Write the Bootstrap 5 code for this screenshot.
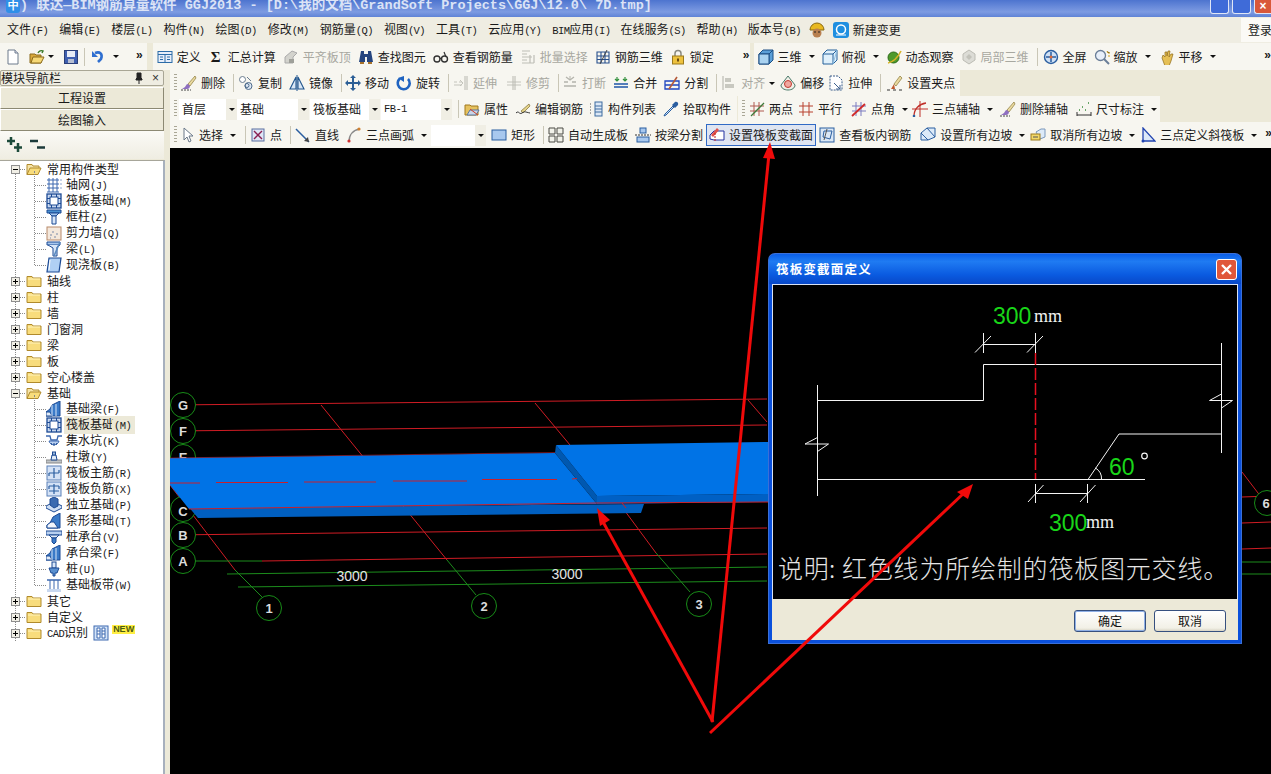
<!DOCTYPE html>
<html lang="zh">
<head>
<meta charset="UTF-8">
<title>联达-BIM钢筋算量软件 GGJ2013</title>
<link href="https://cdn.jsdelivr.net/npm/bootstrap@5.3.3/dist/css/bootstrap.min.css" rel="stylesheet">
<style>
  html, body { margin: 0; height: 100%; overflow: hidden; background: #000; }
  body { font: 12px/16px "Noto Sans CJK SC", "Liberation Sans", sans-serif; color: #1a1a1a; }
  .app { width: 1271px; height: 774px; position: relative; background: #ece9d8; }
  .lt { font: 10.500px/16px "Liberation Mono", monospace; letter-spacing: -.6px; }

  .titlebar { height: 17px; padding-left: 6px; background: linear-gradient(#4d74cf, #7d9be2 70%, #5f83d6); overflow: hidden; }
  .titlebar .ttl { font: bold 13.5px/11px "Liberation Mono", "Noto Sans CJK SC", monospace; color: #dbe3f6; white-space: pre; }
  .appicon { width: 14px; height: 13px; border-radius: 0 0 3px 3px; background: #2f8fe8; color: #fff; font: bold 11px/11px "Liberation Sans", sans-serif; text-align: center; flex: none; }
  .winbtns { margin-left: auto; gap: 3px; }
  .winbtn { width: 19px; height: 14px; border: 1px solid #dfe6f6; border-top: 0; border-radius: 0 0 3px 3px; background: #3f6bd8; position: relative; }
  .winbtn.cls { background: #d9583a; width: 17px; border-right: 0; border-radius: 0 0 0 3px; color: #fff; font: bold 12px/12px "Liberation Sans", sans-serif; text-align: center; }

  .menubar { height: 26px; padding-left: 7px; background: #efede2; }
  .mi { margin-right: 11px; white-space: nowrap; }
  .login { margin-left: auto; width: 30px; height: 24px; line-height: 24px; padding-left: 7px; background: #fbfaf6; overflow: hidden; white-space: nowrap; }

  .tbrow { height: 26px; background: #ece9d8; white-space: nowrap; overflow: hidden; }
  .tbrow.first { height: 27px; }
  .strip { height: 100%; display: flex; align-items: center; background: #f7f6f0; flex: none; overflow: hidden; }
  .grip { width: 3px; height: 18px; margin: 0 2px 0 4px; flex: none; background: repeating-linear-gradient(#a9a695 0 1px, transparent 1px 3px); }
  .tool { display: flex; align-items: center; gap: 4px; margin-right: 7px; flex: none; }
  .tool.off { color: #a8a8a0; }
  .tool.snug { margin-right: 6px; }
  .tool.snug4 { margin-right: 4px; }
  .tool svg, .tk svg, .tn svg, .tico { width: 16px; height: 16px; flex: none; }
  .tri { width: 0; height: 0; border: 3px solid transparent; border-top: 3px solid #111; border-bottom: 0; margin-left: 3px; margin-right: 1px; flex: none; }
  .tri.close { margin-left: 0; }
  .sep { width: 1px; height: 18px; background: #c9c6b6; margin: 0 5px 0 1px; flex: none; }
  .more { font: bold 12px/14px "Liberation Sans", sans-serif; margin-bottom: 4px; flex: none; }
  .sigma { width: 16px; text-align: center; font: bold 15px/16px "Liberation Serif", serif; }
  .combo { display: flex; align-items: center; height: 21px; background: #fff; padding-left: 3px; flex: none; }
  .combo-btn { width: 11px; height: 21px; background: #f0eee4; display: flex; align-items: center; justify-content: center; flex: none; }
  .combo-btn .tri { margin: 0; }
  .combo-wrap { display: flex; flex: none; }
  .combo-a { width: 47px; } .combo-b { width: 61px; } .combo-c { width: 59px; } .combo-d { width: 60px; } .combo-e { width: 44px; }
  .strip-a { width: 790px; } .strip-b { width: 567px; } .strip-c { width: 422px; margin-left: 1px; }
  .picked { border: 1px solid #316ac5; background: #dfe5f1; height: 22px; padding: 0 2px; margin-right: 3px; margin-left: -3px; }
  /* small nudges to keep the toolbar items where the reference has them */
  .mn1 { margin-left: -1px; } .mn2 { margin-left: -2px; } .mn3 { margin-left: -3px; } .mn4 { margin-left: -4px; }
  .mp1 { margin-left: 1px; } .mp2 { margin-left: 2px; } .mp5 { margin-left: 5px; } .mp6 { margin-left: 6px; } .mp22 { margin-left: 22px; } .sepgap { margin-left: 6px; }
  .picked.mn1 { margin-left: -4px; }

  .sidebar { width: 165px; flex: none; position: relative; }
  .panel-h { height: 16px; border: 1px solid #a9a695; border-radius: 2px; margin-right: 1px; background: #efede2; overflow: hidden; }
  .panel-h span.ctl { font: 12px/14px "Liberation Sans", sans-serif; color: #333; }
  .navbtn { height: 22px; line-height: 20px; text-align: center; background: #ece9d8; border: 1px solid #fff; border-bottom: 1px solid #8c8973; border-right: 1px solid #8c8973; margin-right: 1px; }
  .nav-top { margin-top: 1px; }
  .treebar { height: 28px; padding: 6px 0 0 7px; background: linear-gradient(#fbfaf6, #efede2); gap: 7px; margin-right: 1px; }
  .tree { position: absolute; top: 90px; left: 0; right: 0; bottom: 0; background: #fff; border-top: 1px solid #a7a69a; border-right: 2px solid #a7b0bd; }
  .tree::before { content: ""; position: absolute; left: 15px; top: 8px; height: 472px; border-left: 1px dotted #8a8a8a; }
  .tn, .tk { height: 16px; display: flex; align-items: center; position: relative; white-space: nowrap; }
  .tn { padding-left: 26px; gap: 5px; }
  .tn::before { content: ""; position: absolute; left: 16px; width: 9px; top: 8px; border-top: 1px dotted #8a8a8a; }
  .exp { position: absolute; left: 11px; top: 4px; width: 9px; height: 9px; background: #f1efe6; border: 1px solid #8f8f8f; z-index: 1; }
  .exp::before { content: ""; position: absolute; left: 1px; right: 1px; top: 3px; height: 1px; background: #000; }
  .exp.plus::after { content: ""; position: absolute; top: 1px; bottom: 1px; left: 3px; width: 1px; background: #000; }
  .kids { position: relative; }
  .kids::before { content: ""; position: absolute; left: 34px; top: -6px; bottom: 8px; border-left: 1px dotted #8a8a8a; }
  .tk { padding-left: 46px; gap: 4px; }
  .tk::before { content: ""; position: absolute; left: 35px; width: 11px; top: 8px; border-top: 1px dotted #8a8a8a; }
  .tk.cur span { background: #ece9d8; padding: 0 2px; margin-left: -2px; }
  .newtag { font: bold 9px/9px "Liberation Sans", sans-serif; background: #ffee44; color: #4a5a10; padding: 0 1px; margin: -8px 0 0 -2px; }

  .gutter { width: 5px; flex: none; }
  .canvas { background: #000; position: relative; overflow: hidden; }
  .canvas > svg { display: block; width: 1101px; height: 626px; }
  .cadtx { font: bold 13px "Liberation Sans", sans-serif; fill: #dcdcdc; text-anchor: middle; }
  .cadn { font: 14px "Liberation Sans", sans-serif; fill: #e4e4e4; text-anchor: middle; }

  .dlg { position: absolute; left: 599px; top: 106px; width: 472px; height: 389px; background: #ece9d8; border: 3px solid #0a50dc; border-top: 0; border-radius: 6px 6px 0 0; box-shadow: 0 0 0 1px #3a6fd8; }
  .dlg-h { height: 30px; margin: 0 -3px; padding: 0 4px 0 7px; background: linear-gradient(#0a5ee8, #1f7bf2 25%, #0a5ae0 70%, #0848c8); color: #fff; font-weight: 700; font-size: 12.5px; letter-spacing: 1.2px; border-radius: 6px 6px 0 0; }
  .dlg-x { width: 21px; height: 21px; border: 1px solid #fff; border-radius: 3px; background: #e0573a; margin-left: auto; position: relative; }
  .dlg-x svg { display: block; width: 19px; height: 19px; }
  .dlg-b { height: 315px; background: #000; border: 1px solid #d8e2f4; border-bottom: 0; }
  .dlg-b svg { display: block; width: 464px; height: 314px; }
  .dimg { font: 23px "Liberation Sans", sans-serif; fill: #19d619; }
  .dimw { font: 18px "Liberation Serif", serif; fill: #f2f2f2; }
  .dnote { font: 25px "Noto Sans CJK SC", sans-serif; font-weight: 300; fill: #e4e4e4; letter-spacing: .8px; }
  .dlg-f { height: 41px; padding: 11px 12px 0 0; gap: 8px; }
  .xpbtn { width: 72px; height: 22px; padding: 0; font-size: 12px; line-height: 18px; color: #111; border: 1px solid #36507f; border-radius: 3px; background: linear-gradient(#fff, #f2f0e6 85%, #d8d4c4); }
  .xpbtn.dflt { box-shadow: inset 0 0 0 1px #8fb0e6; }

  .overlay { position: absolute; left: 0; top: 0; width: 1271px; height: 774px; pointer-events: none; }
</style>
</head>
<body>
<svg width="0" height="0" class="position-absolute">
  <defs>
    <symbol id="i-new" viewBox="0 0 16 16"><path d="M3 1h7l3 3v11H3z" fill="#fff" stroke="#6d7a8c"/><path d="M10 1v3h3" fill="#dde" stroke="#6d7a8c"/></symbol>
    <symbol id="i-open" viewBox="0 0 16 16"><path d="M1 14V5h5l1 1h5v8z" fill="#d9a93a" stroke="#8b6b1c"/><path d="M2 14l2-6h11l-3 6z" fill="#f6d875" stroke="#8b6b1c"/><path d="M9 4c1-2 3-3 5-2l-1 2" fill="none" stroke="#3a7a2a" stroke-width="1.4"/></symbol>
    <symbol id="i-save" viewBox="0 0 16 16"><rect x="1.5" y="1.5" width="13" height="13" fill="#3f5fb0" stroke="#2b3f78"/><rect x="4" y="2" width="8" height="6" fill="#e8ecf6"/><rect x="5" y="10" width="6" height="4" fill="#b7bfd2"/></symbol>
    <symbol id="i-undo" viewBox="0 0 16 16"><path d="M5 4c5-2 8 1 6 6l-3 3" fill="none" stroke="#2f6fd0" stroke-width="2.6"/><path d="M2 2v6h6z" fill="#2f6fd0"/></symbol>
    <symbol id="i-def" viewBox="0 0 16 16"><rect x="1" y="2.500" width="14" height="11" fill="#e7eefa" stroke="#2c6ca8"/><path d="M1 5.500h14M8 5.500v8M3 8h3M3 10.500h3M10 8h3M10 10.500h3" stroke="#2c6ca8"/></symbol>
    <symbol id="i-flat" viewBox="0 0 16 16"><path d="M2 14V8l7-6 5 2-4 4v6z" fill="#d3d3cd" stroke="#aaa"/><rect x="6" y="10" width="5" height="4" fill="#9fa09a"/></symbol>
    <symbol id="i-bino" viewBox="0 0 16 16"><path d="M3 2h3v3h4V2h3l2 11H9V8H7v5H1z" fill="#26457e"/><path d="M2 13h4v2H2zM10 13h4v2h-4z" fill="#a8722a"/></symbol>
    <symbol id="i-glass" viewBox="0 0 16 16"><circle cx="4" cy="10" r="3" fill="none" stroke="#333" stroke-width="1.4"/><circle cx="11.500" cy="10" r="3" fill="none" stroke="#333" stroke-width="1.4"/><path d="M7 9.500h2M13 8l-2-5" stroke="#333" stroke-width="1.2" fill="none"/></symbol>
    <symbol id="i-batch" viewBox="0 0 16 16"><path d="M2 2h8M2 5h5M2 8h10M2 11h5M2 14h12M14 6v8M10 6v8" stroke="#bdbdb6" stroke-width="1.2"/></symbol>
    <symbol id="i-rebar" viewBox="0 0 16 16"><path d="M2 3h12v11H2zM2 7h12M2 10.500h12M6 3v11M10 3v11" fill="none" stroke="#28508e" stroke-width="1.1"/><path d="M12 1L5 15" stroke="#444"/></symbol>
    <symbol id="i-lock" viewBox="0 0 16 16"><path d="M5 7V4.500a3 3 0 016 0V7" fill="none" stroke="#8a8a80" stroke-width="1.500"/><rect x="2.500" y="7" width="11" height="8" fill="#eec23e" stroke="#9c7a1c"/><rect x="7" y="9.500" width="2" height="3" fill="#6b4c10"/></symbol>
    <symbol id="i-cube" viewBox="0 0 16 16"><path d="M1 5l4-4h10v10l-4 4H1z" fill="#5b9fd8" stroke="#1c4f84"/><path d="M1 5h10v10M11 5l4-4" fill="none" stroke="#1c4f84"/><path d="M1 5h10v10H1z" fill="#a9d2f0" stroke="#1c4f84"/></symbol>
    <symbol id="i-cube2" viewBox="0 0 16 16"><path d="M1 5l4-4h10v10l-4 4H1z" fill="#dff0fb" stroke="#24609a"/><path d="M1 5h10v10M11 5l4-4" fill="none" stroke="#24609a"/><path d="M11 15L15 1" stroke="#8cc0e6"/></symbol>
    <symbol id="i-orbit" viewBox="0 0 16 16"><circle cx="7.500" cy="8.500" r="5.500" fill="#4f9a2c" stroke="#2b6a18"/><path d="M2 14C7 13 12 8 15 2" stroke="#d8b428" stroke-width="1.600" fill="none"/></symbol>
    <symbol id="i-part" viewBox="0 0 16 16"><path d="M8 1l6 4v6l-6 4-6-4V5z" fill="#dcdcd6" stroke="#bcbcb4"/><path d="M8 5l3 3-3 3-3-3z" fill="#c2c2ba"/></symbol>
    <symbol id="i-full" viewBox="0 0 16 16"><circle cx="8" cy="8" r="6.500" fill="#cfe0f4" stroke="#2a5ea0" stroke-width="1.400"/><path d="M8 3v10M3 8h10" stroke="#2a5ea0" stroke-width="1.500"/><circle cx="8" cy="8" r="1.500" fill="#e06a3a"/></symbol>
    <symbol id="i-zoom" viewBox="0 0 16 16"><circle cx="6.500" cy="6.500" r="5" fill="#e8eff9" stroke="#6a7e98" stroke-width="1.300"/><path d="M10 10l5 5" stroke="#6a7e98" stroke-width="2"/><path d="M13 2l1 2 2 0M14 7h2" stroke="#d0a020"/></symbol>
    <symbol id="i-hand" viewBox="0 0 16 16"><path d="M3 9l1-3 2 2V3h2v4l1-5h2l-1 6 2-3h2l-2 7-2 5H6z" fill="#e5bf55" stroke="#8e6a18" stroke-width=".7"/></symbol>
    <symbol id="i-brush" viewBox="0 0 16 16"><path d="M14 1L7 9l2 2 6-8z" fill="#e9d9a0" stroke="#77651f" stroke-width=".6"/><path d="M7 9c-2 0-2 2-3 3l-3 2h5c2 0 3-2 3-3z" fill="#8f6fc0"/><path d="M0 15h10" stroke="#444" stroke-dasharray="2 1"/></symbol>
    <symbol id="i-copy" viewBox="0 0 16 16"><circle cx="4.500" cy="4.500" r="3" fill="#fff" stroke="#6b7d90"/><circle cx="10.500" cy="11" r="3.500" fill="#dfe9f5" stroke="#4d6a8a"/><circle cx="9" cy="10.500" r="2" fill="none" stroke="#4d6a8a"/><path d="M9 2l4 4" stroke="#6b7d90"/></symbol>
    <symbol id="i-mirror" viewBox="0 0 16 16"><path d="M7 2v12H1zM9 2v12h6z" fill="#dbe8f6" stroke="#21558e" stroke-width="1.100"/><path d="M8 0v16" stroke="#21558e"/></symbol>
    <symbol id="i-move" viewBox="0 0 16 16"><path d="M8 0l3 3H9v4h4V5l3 3-3 3V9H9v4h2l-3 3-3-3h2V9H3v2L0 8l3-3v2h4V3H5z" fill="#2c5f96"/></symbol>
    <symbol id="i-rotate" viewBox="0 0 16 16"><path d="M12 4a6 6 0 11-8-.5" fill="none" stroke="#1f63c0" stroke-width="2.600"/><path d="M8 1v6L2 3z" fill="#1f63c0"/></symbol>
    <symbol id="i-ext" viewBox="0 0 16 16"><path d="M1 7h3M6 7h3M1 10h8" stroke="#c4c4bc"/><path d="M12 1v14M14 1v14" stroke="#b8b8b0"/><path d="M7 5l3 3-3 3" fill="none" stroke="#c4c4bc"/></symbol>
    <symbol id="i-trim" viewBox="0 0 16 16"><path d="M1 7h14M1 10h14" stroke="#c4c4bc"/><path d="M7 1v14M9 1v14" stroke="#b8b8b0"/></symbol>
    <symbol id="i-break" viewBox="0 0 16 16"><path d="M2 7h4M10 7h4M2 11h12" stroke="#b4b4ac" stroke-width="1.300"/><path d="M4 2l4 3 4-3" fill="none" stroke="#b4b4ac" stroke-width="1.300"/><path d="M8 1v4" stroke="#b4b4ac"/></symbol>
    <symbol id="i-merge" viewBox="0 0 16 16"><path d="M1 9h14M1 12h14" stroke="#1f55a8" stroke-width="1.300"/><path d="M4 2v4M12 2v4M2 4l2 2 2-2M10 4l2 2 2-2" fill="none" stroke="#2f8f3a" stroke-width="1.200"/></symbol>
    <symbol id="i-split" viewBox="0 0 16 16"><path d="M1 6h14v8H1zM1 10h14" fill="none" stroke="#1f45c0" stroke-width="1.300"/><path d="M5 14l8-12" stroke="#b55a3a" stroke-width="1.600"/></symbol>
    <symbol id="i-align" viewBox="0 0 16 16"><path d="M2 1v14" stroke="#b0b0a8"/><rect x="4" y="3" width="6" height="4" fill="#c8c8c0"/><rect x="4" y="9" width="9" height="4" fill="#c8c8c0"/></symbol>
    <symbol id="i-offset" viewBox="0 0 16 16"><path d="M8 1l7 9c0 3-3 5-7 5s-7-2-7-5z" fill="#f2f0e8" stroke="#4a7a6a"/><circle cx="8" cy="9" r="3.500" fill="#f0a8a0" stroke="#c03a30"/></symbol>
    <symbol id="i-stretch" viewBox="0 0 16 16"><path d="M2 1h8l4 4v10H2z" fill="#fff" stroke="#3d5f8c" stroke-dasharray="2 1"/><path d="M6 8l6 6M12 10v4H8" fill="none" stroke="#3d5f8c"/></symbol>
    <symbol id="i-grips" viewBox="0 0 16 16"><path d="M13 1L7 9l2 2 6-8z" fill="#e9d9a0" stroke="#77651f" stroke-width=".6"/><path d="M7 9l-3 5h4z" fill="#c05a30"/><path d="M0 15h3M6 15h3M12 15h3" stroke="#333"/></symbol>
    <symbol id="i-prop" viewBox="0 0 16 16"><path d="M1 14V4h5l1 1h7v9z" fill="#e5c15e" stroke="#a0781c"/><path d="M3 14l3-5h9l-3 5z" fill="#c8d5e8" stroke="#5a77a0"/><path d="M6 8l8 6" stroke="#d0402a"/></symbol>
    <symbol id="i-pen" viewBox="0 0 16 16"><path d="M14 3L6 10l2 2 7-7z" fill="#e4d38a" stroke="#6a581a" stroke-width=".6"/><path d="M1 12c3-3 3 2 6 0s3-1 8 0" fill="none" stroke="#333"/></symbol>
    <symbol id="i-list" viewBox="0 0 16 16"><rect x="7" y="1" width="7" height="14" fill="#dce8f6" stroke="#3e6ca0"/><path d="M7 5h7M7 8h7M7 11h7" stroke="#3e6ca0"/><path d="M2 3h2M2 6h2M2 9h2M2 12h2" stroke="#555" stroke-dasharray="1 1"/></symbol>
    <symbol id="i-pick" viewBox="0 0 16 16"><path d="M10 5L2 13l-1 2 2-1 8-8z" fill="#cfe4f8" stroke="#2a5ea0"/><path d="M9 4l3 3 3-3c1-3-2-4-3-3z" fill="#2a5ea0"/></symbol>
    <symbol id="i-two" viewBox="0 0 16 16"><path d="M5 1v14M10 1v14M1 5h14M1 10h14" stroke="#b05a50"/><path d="M2 15L15 2" stroke="#3d7a3a" stroke-width="1.300"/></symbol>
    <symbol id="i-para" viewBox="0 0 16 16"><path d="M5 1v14M11 1v14M1 5h14M1 11h14" stroke="#b8402f"/></symbol>
    <symbol id="i-angle" viewBox="0 0 16 16"><path d="M5 1v14M10 1v14M1 5h14M1 10h14" stroke="#7a7ac0"/><path d="M1 15L14 3" stroke="#d02a2a" stroke-width="1.800"/></symbol>
    <symbol id="i-arc3" viewBox="0 0 16 16"><path d="M2 15C2 8 7 3 14 2" fill="none" stroke="#c0302a" stroke-width="1.300"/><path d="M0 8h16M8 0v16" stroke="#c0302a"/><circle cx="2" cy="15" r="1.300" fill="#2a5ea0"/></symbol>
    <symbol id="i-dim" viewBox="0 0 16 16"><path d="M1 11v4M15 11v4M1 14h14" stroke="#333"/><path d="M3 9h1M6 6h1M9 9h1M12 2h1" stroke="#3a8a3a" stroke-width="1.500"/></symbol>
    <symbol id="i-sel" viewBox="0 0 16 16"><path d="M5 1v12l3-3 2 5 2-1-2-5h4z" fill="#fff" stroke="#6a7888"/></symbol>
    <symbol id="i-point" viewBox="0 0 16 16"><rect x="2" y="2" width="12" height="12" fill="#dfe6f6" stroke="#5a6fa0"/><path d="M4 4l8 8M12 4l-8 8" stroke="#8a1f50" stroke-width="1.400"/></symbol>
    <symbol id="i-line" viewBox="0 0 16 16"><path d="M1 2l13 13" stroke="#2a5ea0" stroke-width="1.500"/><path d="M14 15l-5-1 4-4z" fill="#444"/></symbol>
    <symbol id="i-arc" viewBox="0 0 16 16"><path d="M3 15C3 8 7 3 14 2" fill="none" stroke="#888" stroke-width="1.500"/><circle cx="3" cy="14" r="1.600" fill="#d03030"/><circle cx="13" cy="2" r="1.600" fill="#d08030"/></symbol>
    <symbol id="i-rect" viewBox="0 0 16 16"><rect x="1" y="3" width="14" height="10" fill="#a8c8ee" stroke="#2a5ea0"/></symbol>
    <symbol id="i-auto" viewBox="0 0 16 16"><path d="M1 1h6v6H1zM9 1h6v6H9zM1 9h6v6H1zM9 9h6v6H9z" fill="#f2f2ea" stroke="#4a4a44"/></symbol>
    <symbol id="i-bsplit" viewBox="0 0 16 16"><rect x="5" y="1" width="6" height="5" fill="#a8c8ee" stroke="#2a5ea0"/><path d="M0 8h16" stroke="#333" stroke-dasharray="2 1"/><rect x="2" y="10" width="12" height="5" fill="#a8c8ee" stroke="#2a5ea0"/></symbol>
    <symbol id="i-sect" viewBox="0 0 16 16"><path d="M1 8l4-4h10v9H5l-4-1z" fill="#fff" stroke="#2230a0"/><path d="M2 8l6-7 2 2-6 7z" fill="#e0504a"/><path d="M6 6v9" stroke="#c02020" stroke-dasharray="2 1"/></symbol>
    <symbol id="i-view" viewBox="0 0 16 16"><rect x="1" y="1" width="14" height="14" fill="#dbe8f6" stroke="#2a5ea0"/><path d="M5 4l8 0-2 8-7-2z" fill="none" stroke="#2a5ea0"/><path d="M8 2L5 13" stroke="#555"/></symbol>
    <symbol id="i-slope" viewBox="0 0 16 16"><path d="M1 13V6l6-5h8v9l-7 3z" fill="#dceaf8" stroke="#2a5ea0"/><path d="M7 1l8 9M1 6l7 7" stroke="#2a5ea0"/></symbol>
    <symbol id="i-unslope" viewBox="0 0 16 16"><path d="M6 5l5-3h4v8l-5 2z" fill="#dceaf8" stroke="#7a98bc"/><rect x="1" y="7" width="9" height="6" fill="#f2d868" stroke="#9c7a1c"/><path d="M3 10h5" stroke="#555"/></symbol>
    <symbol id="i-tri3" viewBox="0 0 16 16"><path d="M3 1v13h12z" fill="#dce8f8" stroke="#2244b0" stroke-width="1.300"/><circle cx="3" cy="14" r="1.500" fill="#2244b0"/></symbol>
    <symbol id="t-folder" viewBox="0 0 16 16"><path d="M1 13.500v-10h5l1 1.500h8v8.500z" fill="#f8dc7c" stroke="#b08a2c"/><path d="M2 6h12" stroke="#fff3bc"/></symbol>
    <symbol id="t-open" viewBox="0 0 16 16"><path d="M1 13.500v-10h5l1 1.500h6v2" fill="#f6e4a8" stroke="#b08a2c"/><path d="M1 13.500L4 7h11l-3 6.500z" fill="#f8dc7c" stroke="#b08a2c"/></symbol>
    <symbol id="t-axis" viewBox="0 0 16 16"><path d="M1 3h12M1 7h12M1 11h12M1 15h12M3 1v14M7 1v14M11 1v14" stroke="#3c68b0"/><path d="M14 3h2M14 7h2M14 11h2" stroke="#8fa8d0"/></symbol>
    <symbol id="t-raft" viewBox="0 0 16 16"><rect x="1" y="1" width="14" height="14" fill="#c8d8f0" stroke="#1c4a94" stroke-width="1.300"/><rect x="4" y="4" width="8" height="8" fill="#fff" stroke="#1c4a94"/><path d="M1 5.500h3M1 10.500h3M12 5.500h3M12 10.500h3M5.500 1v3M10.500 1v3M5.500 12v3M10.500 12v3" stroke="#1c4a94"/></symbol>
    <symbol id="t-col" viewBox="0 0 16 16"><path d="M1 1h14v3H1z" fill="#4a90d0" stroke="#1c4a94"/><path d="M3 4h10l-3 3H6z" fill="#a8c8ee" stroke="#1c4a94"/><path d="M6 7h4v8H6z" fill="#d8e6f8" stroke="#1c4a94"/></symbol>
    <symbol id="t-wall" viewBox="0 0 16 16"><rect x="1" y="2" width="14" height="13" fill="#f4e8dc" stroke="#b88a6a"/><path d="M4 10h2M8 12h2M6 7h2M10 9h2M4 13h1" stroke="#7a8aa8"/></symbol>
    <symbol id="t-beam" viewBox="0 0 16 16"><path d="M1 1h13v3H1z" fill="#a8c8ee" stroke="#1c4a94"/><path d="M2 4l5 3v8h4V6l3-2" fill="#d8e6f8" stroke="#1c4a94"/><path d="M8 15l6-14" stroke="#5a8ac0" stroke-width="1.600"/></symbol>
    <symbol id="t-slab" viewBox="0 0 16 16"><path d="M3 1h12l-2 14H1z" fill="#b0d0f4" stroke="#1c4a94" stroke-width="1.200"/><path d="M4 3L3 13" stroke="#fff"/></symbol>
    <symbol id="t-fbeam" viewBox="0 0 16 16"><path d="M0 15V11l4-3 2-4 8-4v15z" fill="#3a7ac8" stroke="#1c4a94"/><path d="M0 15V11h4l2 4z" fill="#e2ecf8" stroke="#1c4a94"/><path d="M6 4v11M10 3v12" stroke="#d8e6f8"/></symbol>
    <symbol id="t-pit" viewBox="0 0 16 16"><path d="M0 3h4l1 4h6l1-4h4" fill="none" stroke="#3c68b0" stroke-width="1.300"/><path d="M3 8c1 5 9 5 10 0z" fill="#b8cff0" stroke="#3c68b0"/><path d="M5 10l1 2M8 10v3M11 10l-1 2" stroke="#1c4a94"/></symbol>
    <symbol id="t-pier" viewBox="0 0 16 16"><rect x="0" y="11" width="16" height="3" fill="#bfc4c8" stroke="#888"/><path d="M5 11l1-5h4l1 5z" fill="#e2ecf8" stroke="#1c4a94"/><rect x="6.500" y="3" width="3" height="3" fill="#9ab8dc" stroke="#1c4a94"/></symbol>
    <symbol id="t-main" viewBox="0 0 16 16"><rect x="1" y="1" width="14" height="14" fill="#d4e2f6" stroke="#5a80b8"/><path d="M8 3v10M3 8h10M3 8v3M13 8V5" stroke="#2a5ea0" stroke-width="1.200" fill="none"/></symbol>
    <symbol id="t-neg" viewBox="0 0 16 16"><rect x="1" y="1" width="14" height="14" fill="#d4e2f6" stroke="#5a80b8"/><path d="M3 5h10M3 5v3M13 5v3M3 10h10M8 3v10" stroke="#2a5ea0" stroke-width="1.200" fill="none"/></symbol>
    <symbol id="t-iso" viewBox="0 0 16 16"><path d="M0 9l8-4 8 4v2l-8 4-8-4z" fill="#cfdff4" stroke="#1c4a94"/><path d="M4 8V2l4-2 4 2v7l-4 2z" fill="#3a6ab0" stroke="#1c4a94"/></symbol>
    <symbol id="t-strip" viewBox="0 0 16 16"><path d="M1 15v-3l3-2 3-6 7-4v15z" fill="#3a7ac8" stroke="#1c4a94"/><path d="M1 15v-3l4-3h3l4 6z" fill="#f2f6fc" stroke="#1c4a94"/></symbol>
    <symbol id="t-cap" viewBox="0 0 16 16"><path d="M0 2h16v4H0z" fill="#b8d0f0" stroke="#1c4a94"/><path d="M3 6h10l-3 3H6z" fill="#e2ecf8" stroke="#1c4a94"/><path d="M6 9h4v4l-2 2-2-2z" fill="#3a7ac8" stroke="#1c4a94"/></symbol>
    <symbol id="t-pile" viewBox="0 0 16 16"><rect x="6" y="1" width="4" height="6" fill="#d8e6f8" stroke="#1c4a94"/><path d="M3 7h10l-2 5H9v3H7v-3H5z" fill="#5a90d0" stroke="#1c4a94"/></symbol>
    <symbol id="t-band" viewBox="0 0 16 16"><path d="M1 3h14M1 14h14" stroke="#3c68b0" stroke-width="1.400"/><path d="M4 3v11M8 3v11M12 3v11" stroke="#3c68b0"/><rect x="1" y="12" width="14" height="3" fill="#c8d8f0"/></symbol>
    <symbol id="t-cad" viewBox="0 0 16 16"><rect x="1" y="1" width="14" height="14" fill="#d4e4f8" stroke="#3c68b0"/><path d="M4 3h3v10H4zM9 3h3v10H9zM4 6h3M4 9h3M9 6h3M9 9h3" fill="#fff" stroke="#3c68b0"/></symbol>
  </defs>
</svg>

<div class="app d-flex flex-column">
  <div class="titlebar d-flex">
    <div class="appicon">中</div>
    <div class="ttl">) 联达—BIM钢筋算量软件 GGJ2013 - [D:\我的文档\GrandSoft Projects\GGJ\12.0\ 7D.tmp]</div>
    <div class="winbtns d-flex">
      <div class="winbtn"></div>
      <div class="winbtn"></div>
      <div class="winbtn cls">×</div>
    </div>
  </div>

  <div class="menubar d-flex align-items-center">
    <span class="mi">文件<span class="lt">(F)</span></span>
    <span class="mi">编辑<span class="lt">(E)</span></span>
    <span class="mi">楼层<span class="lt">(L)</span></span>
    <span class="mi">构件<span class="lt">(N)</span></span>
    <span class="mi">绘图<span class="lt">(D)</span></span>
    <span class="mi">修改<span class="lt">(M)</span></span>
    <span class="mi">钢筋量<span class="lt">(Q)</span></span>
    <span class="mi">视图<span class="lt">(V)</span></span>
    <span class="mi">工具<span class="lt">(T)</span></span>
    <span class="mi">云应用<span class="lt">(Y)</span></span>
    <span class="mi"><span class="lt">BIM</span>应用<span class="lt">(I)</span></span>
    <span class="mi mn1">在线服务<span class="lt">(S)</span></span>
    <span class="mi">帮助<span class="lt">(H)</span></span>
    <span class="mi mn1">版本号<span class="lt">(B)</span></span>
    <svg class="tico me-2 mn3" viewBox="0 0 16 16"><path d="M1 8a7 7 0 0114 0z" fill="#e8b820" stroke="#8a6a10"/><circle cx="8" cy="11" r="4.500" fill="#b88050"/><path d="M5 10h2M9 10h2" stroke="#222"/></svg>
    <svg class="tico me-1" viewBox="0 0 16 16"><rect x="0" y="0" width="16" height="16" rx="3" fill="#1f8fe0"/><circle cx="8" cy="7.500" r="4.500" fill="none" stroke="#fff" stroke-width="1.500"/><path d="M3 13h10" stroke="#fff"/></svg>
    <span class="ms-0">新建变更</span>
    <div class="login">登录</div>
  </div>

  <div class="tbrow first d-flex">
    <div class="strip ps-1">
      <div class="tool mp1 me-2"><svg><use href="#i-new"/></svg></div>
      <div class="tool gap-0 me-2"><svg><use href="#i-open"/></svg><i class="tri"></i></div>
      <div class="tool me-1"><svg><use href="#i-save"/></svg></div>
      <i class="sep"></i>
      <div class="tool me-3"><svg><use href="#i-undo"/></svg><i class="tri"></i></div>
      <span class="more me-1">»</span>
    </div>
    <div class="strip mp6 ps-1">
      <div class="tool"><svg><use href="#i-def"/></svg>定义</div>
      <div class="tool"><span class="sigma">Σ</span>汇总计算</div>
      <div class="tool off"><svg><use href="#i-flat"/></svg>平齐板顶</div>
      <div class="tool"><svg><use href="#i-bino"/></svg>查找图元</div>
      <div class="tool"><svg><use href="#i-glass"/></svg>查看钢筋量</div>
      <div class="tool off"><svg><use href="#i-batch"/></svg>批量选择</div>
      <div class="tool"><svg><use href="#i-rebar"/></svg>钢筋三维</div>
      <div class="tool"><svg><use href="#i-lock"/></svg>锁定</div>
      <span class="more mp22">»</span>
    </div>
    <div class="strip ms-1 ps-1 flex-grow-1">
      <div class="tool snug"><svg><use href="#i-cube"/></svg>三维<i class="tri"></i></div>
      <div class="tool snug"><svg><use href="#i-cube2"/></svg>俯视<i class="tri"></i></div>
      <div class="tool"><svg><use href="#i-orbit"/></svg>动态观察</div>
      <div class="tool off"><svg><use href="#i-part"/></svg>局部三维</div>
      <i class="sep"></i>
      <div class="tool"><svg><use href="#i-full"/></svg>全屏</div>
      <div class="tool"><svg><use href="#i-zoom"/></svg>缩放<i class="tri"></i></div>
      <div class="tool"><svg><use href="#i-hand"/></svg>平移<i class="tri"></i></div>
      <span class="more ms-auto">»</span>
    </div>
  </div>

  <div class="d-flex flex-grow-1 overflow-hidden">
    <div class="sidebar">
      <div class="panel-h d-flex align-items-center">
        <span class="flex-grow-1">模块导航栏</span>
        <svg class="me-2" width="10" height="12" viewBox="0 0 10 12"><path d="M3 1h4v5l1 1v1H2V7l1-1zM5 8v4" fill="#222" stroke="#222"/></svg>
        <span class="ctl me-1">×</span>
      </div>
      <div class="navbtn nav-top">工程设置</div>
      <div class="navbtn">绘图输入</div>
      <div class="treebar d-flex">
        <svg width="16" height="16" viewBox="0 0 16 16"><path d="M4 0v8M0 4h8M11 6v9M7 10.500h8" stroke="#1c4a3a" stroke-width="2.500"/></svg>
        <svg width="16" height="16" viewBox="0 0 16 16"><path d="M0 4h8M7 10.500h8" stroke="#1c3a3a" stroke-width="2.500"/></svg>
      </div>
      <div class="tree">
        <div class="tn"><i class="exp"></i><svg><use href="#t-open"/></svg>常用构件类型</div>
        <div class="kids">
          <div class="tk"><svg><use href="#t-axis"/></svg><span>轴网<span class="lt">(J)</span></span></div>
          <div class="tk"><svg><use href="#t-raft"/></svg><span>筏板基础<span class="lt">(M)</span></span></div>
          <div class="tk"><svg><use href="#t-col"/></svg><span>框柱<span class="lt">(Z)</span></span></div>
          <div class="tk"><svg><use href="#t-wall"/></svg><span>剪力墙<span class="lt">(Q)</span></span></div>
          <div class="tk"><svg><use href="#t-beam"/></svg><span>梁<span class="lt">(L)</span></span></div>
          <div class="tk"><svg><use href="#t-slab"/></svg><span>现浇板<span class="lt">(B)</span></span></div>
        </div>
        <div class="tn"><i class="exp plus"></i><svg><use href="#t-folder"/></svg>轴线</div>
        <div class="tn"><i class="exp plus"></i><svg><use href="#t-folder"/></svg>柱</div>
        <div class="tn"><i class="exp plus"></i><svg><use href="#t-folder"/></svg>墙</div>
        <div class="tn"><i class="exp plus"></i><svg><use href="#t-folder"/></svg>门窗洞</div>
        <div class="tn"><i class="exp plus"></i><svg><use href="#t-folder"/></svg>梁</div>
        <div class="tn"><i class="exp plus"></i><svg><use href="#t-folder"/></svg>板</div>
        <div class="tn"><i class="exp plus"></i><svg><use href="#t-folder"/></svg>空心楼盖</div>
        <div class="tn"><i class="exp"></i><svg><use href="#t-open"/></svg>基础</div>
        <div class="kids">
          <div class="tk"><svg><use href="#t-fbeam"/></svg><span>基础梁<span class="lt">(F)</span></span></div>
          <div class="tk cur"><svg><use href="#t-raft"/></svg><span>筏板基础<span class="lt">(M)</span></span></div>
          <div class="tk"><svg><use href="#t-pit"/></svg><span>集水坑<span class="lt">(K)</span></span></div>
          <div class="tk"><svg><use href="#t-pier"/></svg><span>柱墩<span class="lt">(Y)</span></span></div>
          <div class="tk"><svg><use href="#t-main"/></svg><span>筏板主筋<span class="lt">(R)</span></span></div>
          <div class="tk"><svg><use href="#t-neg"/></svg><span>筏板负筋<span class="lt">(X)</span></span></div>
          <div class="tk"><svg><use href="#t-iso"/></svg><span>独立基础<span class="lt">(P)</span></span></div>
          <div class="tk"><svg><use href="#t-strip"/></svg><span>条形基础<span class="lt">(T)</span></span></div>
          <div class="tk"><svg><use href="#t-cap"/></svg><span>桩承台<span class="lt">(V)</span></span></div>
          <div class="tk"><svg><use href="#t-fbeam"/></svg><span>承台梁<span class="lt">(F)</span></span></div>
          <div class="tk"><svg><use href="#t-pile"/></svg><span>桩<span class="lt">(U)</span></span></div>
          <div class="tk"><svg><use href="#t-band"/></svg><span>基础板带<span class="lt">(W)</span></span></div>
        </div>
        <div class="tn"><i class="exp plus"></i><svg><use href="#t-folder"/></svg>其它</div>
        <div class="tn"><i class="exp plus"></i><svg><use href="#t-folder"/></svg>自定义</div>
        <div class="tn"><i class="exp plus"></i><svg><use href="#t-folder"/></svg><span><span class="lt">CAD</span>识别</span><svg><use href="#t-cad"/></svg><span class="newtag">NEW</span></div>
      </div>
    </div>
    <div class="gutter"></div>

    <div class="d-flex flex-column flex-grow-1 overflow-hidden">
      <div class="tbrow">
        <div class="strip strip-a">
          <i class="grip"></i>
          <div class="tool mp2"><svg><use href="#i-brush"/></svg>删除</div>
          <i class="sep"></i>
          <div class="tool mn1"><svg><use href="#i-copy"/></svg>复制</div>
          <div class="tool"><svg><use href="#i-mirror"/></svg>镜像</div>
          <i class="sep"></i>
          <div class="tool mn2"><svg><use href="#i-move"/></svg>移动</div>
          <div class="tool"><svg><use href="#i-rotate"/></svg>旋转</div>
          <i class="sep"></i>
          <div class="tool off mn1"><svg><use href="#i-ext"/></svg>延伸</div>
          <div class="tool off mp2"><svg><use href="#i-trim"/></svg>修剪</div>
          <i class="sep"></i>
          <div class="tool off mn2"><svg><use href="#i-break"/></svg>打断</div>
          <div class="tool"><svg><use href="#i-merge"/></svg>合并</div>
          <div class="tool"><svg><use href="#i-split"/></svg>分割</div>
          <i class="sep"></i>
          <div class="tool off mn1 snug4"><svg><use href="#i-align"/></svg>对齐<i class="tri close"></i></div>
          <div class="tool snug4"><svg><use href="#i-offset"/></svg>偏移</div>
          <div class="tool"><svg><use href="#i-stretch"/></svg>拉伸</div>
          <i class="sep"></i>
          <div class="tool mp1"><svg><use href="#i-grips"/></svg>设置夹点</div>
        </div>
      </div>

      <div class="tbrow d-flex">
        <div class="strip strip-b">
          <i class="grip"></i>
          <div class="combo-wrap"><div class="combo combo-a">首层</div><div class="combo-btn"><i class="tri"></i></div></div>
          <div class="combo-wrap"><div class="combo combo-b">基础</div><div class="combo-btn"><i class="tri"></i></div></div>
          <div class="combo-wrap mp1"><div class="combo combo-c">筏板基础</div><div class="combo-btn"><i class="tri"></i></div></div>
          <div class="combo-wrap mp1"><div class="combo combo-d"><span class="lt">FB-1</span></div><div class="combo-btn"><i class="tri"></i></div></div>
          <i class="sep sepgap"></i>
          <div class="tool"><svg><use href="#i-prop"/></svg>属性</div>
          <div class="tool"><svg><use href="#i-pen"/></svg>编辑钢筋</div>
          <div class="tool mn2"><svg><use href="#i-list"/></svg>构件列表</div>
          <div class="tool"><svg><use href="#i-pick"/></svg>拾取构件</div>
        </div>
        <div class="strip strip-c">
          <i class="grip"></i>
          <div class="tool mp2"><svg><use href="#i-two"/></svg>两点</div>
          <div class="tool mn2"><svg><use href="#i-para"/></svg>平行</div>
          <div class="tool mp2"><svg><use href="#i-angle"/></svg>点角<i class="tri"></i></div>
          <div class="tool mn4"><svg><use href="#i-arc3"/></svg>三点辅轴<i class="tri"></i></div>
          <div class="tool mn1"><svg><use href="#i-brush"/></svg>删除辅轴</div>
          <div class="tool mp1"><svg><use href="#i-dim"/></svg>尺寸标注<i class="tri"></i></div>
        </div>
      </div>

      <div class="tbrow">
        <div class="strip w-100">
          <i class="grip"></i>
          <div class="tool"><svg><use href="#i-sel"/></svg>选择<i class="tri"></i></div>
          <i class="sep"></i>
          <div class="tool mn1"><svg><use href="#i-point"/></svg>点</div>
          <i class="sep"></i>
          <div class="tool mn1"><svg><use href="#i-line"/></svg>直线</div>
          <div class="tool"><svg><use href="#i-arc"/></svg>三点画弧<i class="tri"></i></div>
          <div class="combo-wrap mn4"><div class="combo combo-e"></div><div class="combo-btn"><i class="tri"></i></div></div>
          <div class="tool mp5"><svg><use href="#i-rect"/></svg>矩形</div>
          <i class="sep"></i>
          <div class="tool mn1"><svg><use href="#i-auto"/></svg>自动生成板</div>
          <div class="tool"><svg><use href="#i-bsplit"/></svg>按梁分割</div>
          <div class="tool picked mn1"><svg><use href="#i-sect"/></svg>设置筏板变截面</div>
          <div class="tool"><svg><use href="#i-view"/></svg>查看板内钢筋</div>
          <div class="tool mp2"><svg><use href="#i-slope"/></svg>设置所有边坡<i class="tri"></i></div>
          <div class="tool mn3"><svg><use href="#i-unslope"/></svg>取消所有边坡<i class="tri"></i></div>
          <div class="tool mn3"><svg><use href="#i-tri3"/></svg>三点定义斜筏板<i class="tri"></i></div>
          <span class="more">»</span>
        </div>
      </div>

      <div class="canvas flex-grow-1">
        <svg viewBox="170 148 1101 626">
          <!-- 下层轴线 -->
          <g fill="none" stroke="#d01c24" stroke-width="1">
            <path d="M170 405L767 399M170 431L767 425"/>
            <path d="M321 405L447 560M535 403L570 445M622 507L656 553M748 400L767 422M1242 472L1271 510"/>
            <path d="M170 485L235 570"/>
            <path d="M170 535L767 528M262 561L767 554M1242 497L1271 496M1242 523L1271 522M1242 549L1271 548"/>
          </g>
          <g fill="none" stroke="#1c8c1c" stroke-width="1">
            <path d="M170 561H262M227 574L767 567M238 587L767 581M1242 562H1271M1242 574H1271"/>
            <path d="M235 570L262 597M447 560L476 595M656 553L690 592"/>
          </g>
          <!-- 轴号 E、C 被筏板盖住一部分 -->
          <g fill="#000" stroke="#188c18" stroke-width="1">
            <circle cx="183" cy="457" r="12.500"/><circle cx="183" cy="509" r="12.500"/>
          </g>
          <text class="cadtx" x="183" y="462">E</text><text class="cadtx" x="183" y="516">C</text>
          <!-- 筏板 -->
          <path d="M170 485L198 518L641 513L644 504L189 508Z" fill="#005fc0"/>
          <path d="M170 458L555 453L597 504L189 509L170 485Z" fill="#0073e6"/>
          <path d="M556 445L597 496V504L555 453Z" fill="#0058b0"/>
          <path d="M597 496L770 494V502L597 504Z" fill="#0060c4"/>
          <path d="M556 445L770 442V494L597 496Z" fill="#0073e6"/>
          <g fill="none" stroke="#c8202c" stroke-width="1">
            <path d="M189 509L597 503L770 502"/>
            <path d="M170 483H200M216 482.500H288M304 482H376M393 481H467M482 479.500H557M572 479L577 478.500"/>
            <path d="M170 458L555 452.500" stroke-opacity=".55"/>
            <path d="M622 503L626 508"/>
          </g>
          <g fill="#000" stroke="#188c18" stroke-width="1">
            <circle cx="183" cy="405" r="12.500"/><circle cx="183" cy="431" r="12.500"/>
            <circle cx="183" cy="535" r="12.500"/><circle cx="183" cy="561" r="12.500"/>
            <circle cx="269" cy="608" r="12.500"/><circle cx="484" cy="606" r="12.500"/><circle cx="699" cy="604" r="12.500"/><circle cx="1267" cy="503" r="12.500"/>
          </g>
          <g>
            <text class="cadtx" x="183" y="410">G</text><text class="cadtx" x="183" y="436">F</text>
            <text class="cadtx" x="183" y="540">B</text><text class="cadtx" x="183" y="566">A</text>
            <text class="cadtx" x="269" y="613">1</text><text class="cadtx" x="484" y="611">2</text><text class="cadtx" x="699" y="609">3</text><text class="cadtx" x="1266" y="508">6</text>
            <text class="cadn" x="352" y="581">3000</text><text class="cadn" x="567" y="579">3000</text><text class="cadn" x="772" y="578">3</text>
          </g>
        </svg>

        <div class="dlg d-flex flex-column">
          <div class="dlg-h d-flex align-items-center">
            <span>筏板变截面定义</span>
            <div class="dlg-x"><svg viewBox="0 0 19 19"><path d="M5 5l9 9M14 5l-9 9" stroke="#fff" stroke-width="2.400"/></svg></div>
          </div>
          <div class="dlg-b">
            <svg viewBox="773 285 464 314">
              <g fill="none" stroke="#f4f4f4" stroke-width="1">
                <path d="M817.500 385V496M817.500 400.500H983.500V364.500H1221.500M1221.500 343V453M1119 434H1221.500M1119 434L1088 479.500M817.500 479.500H1145"/>
                <path d="M805 444L817.500 437.500V451.500L828.500 444H817.500M805 444H817.500"/>
                <path d="M1209.500 400.500L1221.500 394V408L1232.500 400.500H1209.500"/>
                <path d="M1095.500 468Q1102 472 1101.500 479.500"/>
                <path d="M983.500 333V353M1035.500 333V353M983.500 344.500H1035.500M975 352.500L991 336M1027 352.500L1043 336"/>
                <path d="M1035.500 484V503M1087.500 484V503M1035.500 493.500H1087.500M1028 502L1043.500 485M1080 502L1095.500 485"/>
                <circle cx="1144.500" cy="456" r="2.800" stroke-width="1.200"/>
              </g>
              <path d="M1035.500 353V479" stroke="#e81020" stroke-width="1.500" stroke-dasharray="12 3" fill="none"/>
              <text class="dimg" x="993" y="324">300</text>
              <text class="dimw" x="1034" y="322">mm</text>
              <text class="dimg" x="1109" y="475">60</text>
              <text class="dimg" x="1049" y="531">300</text>
              <text class="dimw" x="1086" y="528">mm</text>
              <text class="dnote" y="578"><tspan x="778">说明</tspan><tspan x="829">:</tspan><tspan x="842">红色线为所绘制的筏板图元交线。</tspan></text>
            </svg>
          </div>
          <div class="dlg-f d-flex justify-content-end">
            <button type="button" class="btn xpbtn dflt">确定</button>
            <button type="button" class="btn xpbtn">取消</button>
          </div>
        </div>
      </div>
    </div>
  </div>

  <svg class="overlay" viewBox="0 0 1271 774">
    <g fill="#f00a0a" stroke="none">
      <path d="M712 722L769 154" stroke="#f00a0a" stroke-width="3" fill="none"/>
      <path d="M770 142L775 159L763 158Z"/>
      <path d="M713 722L602 520" stroke="#f00a0a" stroke-width="3" fill="none"/>
      <path d="M597 508L610 520L600 526Z"/>
      <path d="M710 733L964 493" stroke="#f00a0a" stroke-width="3" fill="none"/>
      <path d="M973 484L968 499L957 492Z"/>
    </g>
  </svg>
</div>
<script src="https://cdn.jsdelivr.net/npm/bootstrap@5.3.3/dist/js/bootstrap.bundle.min.js"></script>
</body>
</html>
